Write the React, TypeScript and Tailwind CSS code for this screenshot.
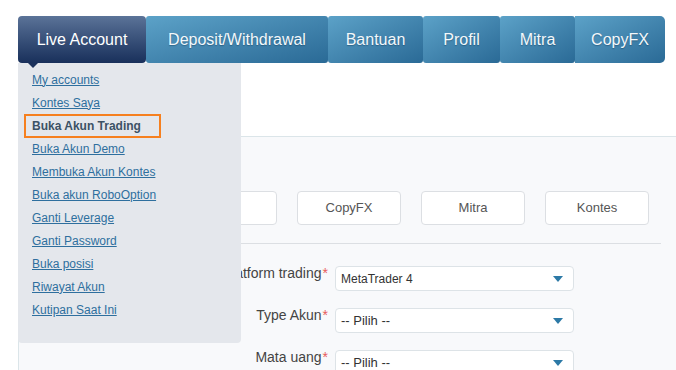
import React from 'react'

const tabs = [
  { label: 'Deposit/Withdrawal', w: 'w-[182px]' },
  { label: 'Bantuan', w: 'w-[95px]' },
  { label: 'Profil', w: 'w-[77px]' },
  { label: 'Mitra', w: 'w-[75px]' },
  { label: 'CopyFX', w: 'w-[90px]' },
]

const menu = [
  'My accounts',
  'Kontes Saya',
  'Buka Akun Trading',
  'Buka Akun Demo',
  'Membuka Akun Kontes',
  'Buka akun RoboOption',
  'Ganti Leverage',
  'Ganti Password',
  'Buka posisi',
  'Riwayat Akun',
  'Kutipan Saat Ini',
]

const fields = [
  { label: 'Platform trading', value: 'MetaTrader 4', small: true },
  { label: 'Type Akun', value: '-- Pilih --' },
  { label: 'Mata uang', value: '-- Pilih --' },
]

function Caret() {
  return (
    <svg width="10" height="6" viewBox="0 0 10 6" className="shrink-0">
      <path d="M0 0 H10 L5 6 Z" fill="#2c79a6" />
    </svg>
  )
}

export default function App() {
  return (
    <div className="relative w-[676px] h-[370px] overflow-hidden bg-white font-['Liberation_Sans',Arial,sans-serif]">
      {/* Top navigation */}
      <div className="ml-[18px] mt-[16px] flex h-[47px] w-[647px]">
        <div className="flex w-[128px] items-center justify-center rounded-[4px] bg-linear-to-b from-[#5b7398] to-[#19305b] text-[16px] text-white">
          Live Account
        </div>
        {tabs.map((t, i) => (
          <div
            key={t.label}
            className={`${t.w} flex items-center justify-center bg-linear-to-br from-[#5ca2c8] to-[#2a6a96] text-[16px] text-[#f3f8fb] [text-shadow:0_1px_1px_rgba(0,40,70,0.35)] ${
              i === tabs.length - 1 ? 'rounded-r-[5px]' : 'rounded-[3px]'
            }`}
          >
            {t.label}
          </div>
        ))}
      </div>

      {/* Content panel */}
      <div className="ml-[18px] mt-[73px] h-[300px] border-t border-l border-[#dbe5e9] bg-[#f8f9fb] pl-[30px] pt-[54px]">
        <div className="flex gap-[20px]">
          {['', '', 'CopyFX', 'Mitra', 'Kontes'].map((b, i) => (
            <div
              key={i}
              className="flex h-[34px] w-[104px] items-center justify-center rounded-[4px] border border-[#dcdfe3] bg-white text-[13px] text-[#555]"
            >
              {b}
            </div>
          ))}
        </div>
        <div className="mt-[18px] h-px w-[612px] bg-[#dcdfe3]" />

        <div className="mt-[21px] flex flex-col gap-[16px]">
          {fields.map((f) => (
            <div key={f.label} className="flex items-start">
              <div className="flex w-[286px] justify-end pr-[7px] text-[14px] leading-[17px] text-[#444]">
                {f.label}
                <span className="ml-[1px] text-[#e85c5c]">*</span>
              </div>
              <div className="mt-[1px] flex h-[25px] w-[239px] items-center justify-between rounded-[4px] border border-[#dde3e7] bg-white pl-[5px] pr-[10px]">
                <span className={`${f.small ? 'text-[12px]' : 'text-[13px]'} text-[#333]`}>{f.value}</span>
                <Caret />
              </div>
            </div>
          ))}
        </div>
      </div>

      {/* Live Account dropdown */}
      <div className="absolute left-[18px] top-[63px] z-10 h-[280px] w-[223px] rounded-b-[4px] bg-[#e4e7ec] pl-[14px] pt-[5px]">
        <div className="absolute left-[10px] top-0 h-0 w-0 border-x-[5px] border-t-[5px] border-x-transparent border-t-[#1b315b]" />
        <ul className="flex flex-col">
          {menu.map((m) =>
            m === 'Buka Akun Trading' ? (
              <li key={m} className="-ml-[8px] flex h-[23px] items-center">
                <span className="border-2 border-[#f6801f] py-[2px] pl-[6px] pr-[18px] text-[12px] font-bold leading-[16px] text-[#3c5265]">
                  {m}
                </span>
              </li>
            ) : (
              <li key={m} className="flex h-[23px] items-center">
                <a href="#" className="text-[12px] text-[#2e6f9e] underline">
                  {m}
                </a>
              </li>
            )
          )}
        </ul>
      </div>
    </div>
  )
}
